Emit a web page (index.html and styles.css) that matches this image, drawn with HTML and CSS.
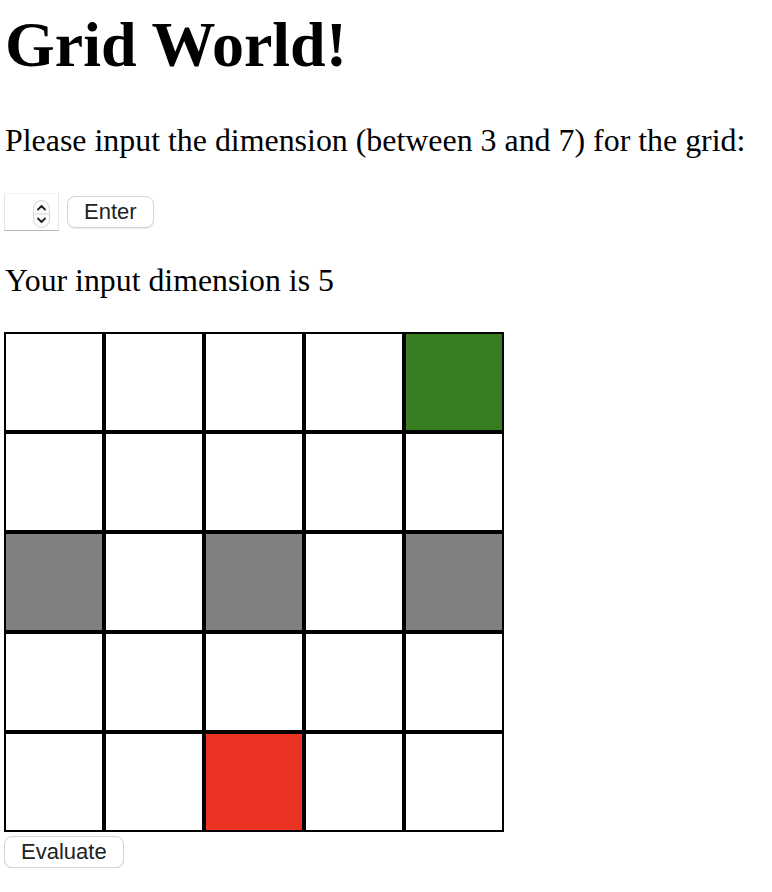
FILE: index.html
```html
<!DOCTYPE html>
<html lang="en">
<head>
<meta charset="utf-8">
<title>Grid World!</title>
<link rel="stylesheet" href="styles.css">
</head>
<body>
<h1 class="title">Grid World!</h1>
<p class="prompt">Please input the dimension (between 3 and 7) for the grid:</p>
<div class="controls">
  <div class="numfield">
    <input class="numinput" type="text" aria-label="Dimension">
    <svg class="stepper" width="17" height="28" viewBox="0 0 17 28" aria-hidden="true">
      <rect x="0.5" y="0.5" width="16" height="27" rx="8" fill="#fbfbfb" stroke="#d6d6d6"/>
      <line x1="1" y1="14" x2="16" y2="14" stroke="#d6d6d6"/>
      <path d="M5 9.5 L8.5 6 L12 9.5" fill="none" stroke="#222" stroke-width="1.8" stroke-linecap="round" stroke-linejoin="round"/>
      <path d="M5 18.5 L8.5 22 L12 18.5" fill="none" stroke="#222" stroke-width="1.8" stroke-linecap="round" stroke-linejoin="round"/>
    </svg>
  </div>
  <button class="btn" type="button">Enter</button>
</div>
<p class="result">Your input dimension is 5</p>
<div class="grid">
  <div class="cell"></div><div class="cell"></div><div class="cell"></div><div class="cell"></div><div class="cell goal"></div>
  <div class="cell"></div><div class="cell"></div><div class="cell"></div><div class="cell"></div><div class="cell"></div>
  <div class="cell wall"></div><div class="cell"></div><div class="cell wall"></div><div class="cell"></div><div class="cell wall"></div>
  <div class="cell"></div><div class="cell"></div><div class="cell"></div><div class="cell"></div><div class="cell"></div>
  <div class="cell"></div><div class="cell"></div><div class="cell start"></div><div class="cell"></div><div class="cell"></div>
</div>
<div class="actions">
  <button class="btn" type="button">Evaluate</button>
</div>
</body>
</html>
```
FILE: styles.css
```css
html, body {
  background: #ffffff;
}
body {
  margin: 0 4px;
  font-family: "Liberation Serif", "Times New Roman", serif;
  color: #000;
}
.title {
  margin: 9px 0 0 1px;
  font-size: 64px;
  line-height: 71px;
  font-weight: bold;
}
.prompt {
  margin: 43px 0 0 1px;
  font-size: 31.9px;
  line-height: 36px;
}
.controls {
  margin-top: 34px;
  display: flex;
  align-items: center;
  gap: 8px;
}
.numfield {
  width: 55px;
  height: 38px;
  box-sizing: border-box;
  border: 1px solid #e6e6e6;
  border-top-color: #f2f2f2;
  border-bottom-color: #b5b5b5;
  display: flex;
  align-items: center;
  justify-content: flex-end;
  padding-right: 8px;
  background: #fff;
}
.numinput {
  width: 20px;
  border: 0;
  outline: none;
  padding: 0;
  background: transparent;
  flex: 1;
}
.stepper {
  display: block;
  margin-top: 4px;
}
.btn {
  height: 32px;
  padding: 0 16px;
  box-sizing: border-box;
  border: 1px solid #d4d4d4;
  border-radius: 8px;
  background: #ffffff;
  box-shadow: 0 1px 1px rgba(0, 0, 0, 0.08);
  font-family: "Liberation Sans", Arial, sans-serif;
  font-size: 22px;
  color: #222;
  line-height: 30px;
}
.result {
  margin: 32px 0 0 1px;
  font-size: 31.8px;
  line-height: 36px;
}
.grid {
  margin-top: 33px;
  width: 500px;
  height: 500px;
  box-sizing: border-box;
  padding: 2px;
  gap: 4px;
  background: #000;
  display: grid;
  grid-template-columns: repeat(5, 1fr);
  grid-template-rows: repeat(5, 1fr);
}
.cell {
  background: #ffffff;
}
.cell.goal {
  background: #387d22;
}
.cell.wall {
  background: #808080;
}
.cell.start {
  background: #ea3323;
}
.actions {
  margin-top: 4px;
}
```
